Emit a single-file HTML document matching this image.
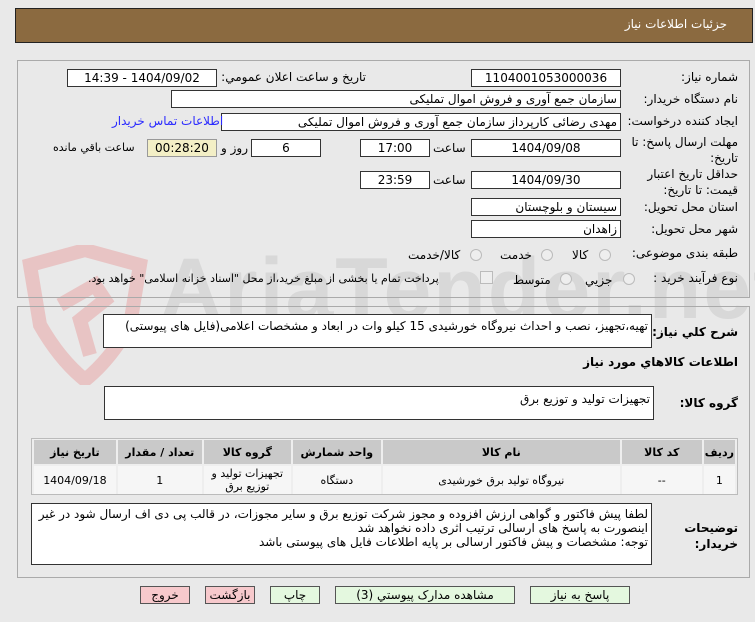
<!DOCTYPE html>
<html><head><meta charset="utf-8"><style>
body{margin:0;width:755px;height:622px;background:#e9e9e9;font-family:"DejaVu Sans",sans-serif;font-size:11px;color:#000;position:relative;overflow:hidden;direction:rtl}
.a{position:absolute;white-space:nowrap}
.in{position:absolute;background:#fff;border:1px solid #333;box-sizing:border-box;font-size:12px;line-height:16px;padding:0 3px;white-space:nowrap;overflow:hidden}
.c{text-align:center}
.lbl{position:absolute;white-space:nowrap;font-size:12px}
.btn{position:absolute;border:1px solid #555;box-sizing:border-box;text-align:center;font-size:12px;line-height:16px;background:#e4f8df}
.rad{position:absolute;width:10px;height:10px;border-radius:50%;border:1px solid #bbb;background:#eee}
table{border-collapse:separate;border-spacing:2px}
td{text-align:center;font-size:11px}
</style></head><body>
<div class="a" style="left:15px;top:8px;width:738px;height:35px;background:#8b6a40;border:1px solid #222;box-sizing:border-box"></div>
<div class="a" style="right:28px;top:17px;color:#fff;font-size:12px">جزئيات اطلاعات نياز</div>

<svg class="a" style="left:20px;top:245px" width="130" height="140" viewBox="0 0 130 140"><path d="M10 20 L65 5 L120 20 L110 80 Q90 115 65 135 Q40 115 20 80 Z" fill="none" stroke="#e8c4c4" stroke-width="14"/><path d="M40 60 L75 40 L85 55 L60 75 L70 110" fill="none" stroke="#e8c4c4" stroke-width="14"/></svg>
<div class="a" style="left:160px;top:240px;font-size:86px;font-weight:bold;color:#d8d8d8;direction:ltr;font-family:'Liberation Sans',sans-serif;letter-spacing:2px">AriaTender.net</div>

<div class="a" style="left:17px;top:60px;width:733px;height:238px;border:1px solid #aaa;box-sizing:border-box"></div>
<div class="a" style="left:17px;top:306px;width:733px;height:272px;border:1px solid #aaa;box-sizing:border-box"></div>

<div class="lbl" style="right:17px;top:70px">شماره نياز:</div>
<div class="in c" style="left:471px;top:69px;width:150px;height:18px">1104001053000036</div>
<div class="lbl" style="right:389px;top:70px">تاريخ و ساعت اعلان عمومي:</div>
<div class="in c" style="left:67px;top:69px;width:150px;height:18px">1404/09/02 - 14:39</div>

<div class="lbl" style="right:17px;top:92px">نام دستگاه خريدار:</div>
<div class="in" style="left:171px;top:90px;width:450px;height:18px">سازمان جمع آوری و فروش اموال تملیکی</div>

<div class="lbl" style="right:17px;top:114px">ايجاد کننده درخواست:</div>
<div class="in" style="left:221px;top:113px;width:400px;height:18px">مهدی رضائی کارپرداز  سازمان جمع آوری و فروش اموال تملیکی</div>
<div class="lbl" style="left:112px;top:114px;color:#2a2aff">اطلاعات تماس خريدار</div>

<div class="lbl" style="right:17px;top:134px;line-height:16px">مهلت ارسال پاسخ: تا<br>تاريخ:</div>
<div class="in c" style="left:471px;top:139px;width:150px;height:18px">1404/09/08</div>
<div class="lbl" style="left:433px;top:141px">ساعت</div>
<div class="in c" style="left:360px;top:139px;width:70px;height:18px">17:00</div>
<div class="in c" style="left:251px;top:139px;width:70px;height:18px">6</div>
<div class="lbl" style="left:221px;top:141px">روز و</div>
<div class="in c" style="left:147px;top:139px;width:70px;height:18px;background:#f3efc6;border-color:#999">00:28:20</div>
<div class="lbl" style="left:53px;top:141px;font-size:11px">ساعت باقي مانده</div>

<div class="lbl" style="right:17px;top:166px;line-height:16px">حداقل تاريخ اعتبار<br>قيمت: تا تاريخ:</div>
<div class="in c" style="left:471px;top:171px;width:150px;height:18px">1404/09/30</div>
<div class="lbl" style="left:433px;top:173px">ساعت</div>
<div class="in c" style="left:360px;top:171px;width:70px;height:18px">23:59</div>

<div class="lbl" style="right:17px;top:200px">استان محل تحويل:</div>
<div class="in" style="left:471px;top:198px;width:150px;height:18px">سیستان و بلوچستان</div>
<div class="lbl" style="right:17px;top:222px">شهر محل تحويل:</div>
<div class="in" style="left:471px;top:220px;width:150px;height:18px">زاهدان</div>

<div class="lbl" style="right:17px;top:246px">طبقه بندی موضوعی:</div>
<div class="rad" style="left:599px;top:249px"></div><div class="lbl" style="left:572px;top:248px">کالا</div>
<div class="rad" style="left:541px;top:249px"></div><div class="lbl" style="left:500px;top:248px">خدمت</div>
<div class="rad" style="left:470px;top:249px"></div><div class="lbl" style="left:408px;top:248px">کالا/خدمت</div>

<div class="lbl" style="right:17px;top:271px">نوع فرآيند خريد :</div>
<div class="rad" style="left:623px;top:273px"></div><div class="lbl" style="left:585px;top:273px">جزيي</div>
<div class="rad" style="left:560px;top:273px"></div><div class="lbl" style="left:513px;top:273px">متوسط</div>
<div class="a" style="left:480px;top:271px;width:11px;height:11px;border:1px solid #bbb;background:#eee"></div>
<div class="lbl" style="left:88px;top:272px;font-size:11px">پرداخت تمام يا بخشی از مبلغ خريد،از محل "اسناد خزانه اسلامی" خواهد بود.</div>

<div class="lbl" style="right:17px;top:325px;font-weight:bold">شرح کلي نياز:</div>
<div class="in" style="left:103px;top:314px;width:549px;height:34px;padding-top:3px;font-size:12px">تهیه،تجهیز، نصب و احداث نیروگاه خورشیدی 15 کیلو وات در ابعاد و مشخصات اعلامی(فایل های پیوستی)</div>
<div class="lbl" style="right:17px;top:355px;font-weight:bold">اطلاعات کالاهاي مورد نياز</div>
<div class="lbl" style="right:17px;top:396px;font-weight:bold">گروه کالا:</div>
<div class="in" style="left:104px;top:386px;width:550px;height:34px;padding-top:4px">تجهیزات تولید و توزیع برق</div>

<div class="a" style="left:31px;top:438px;width:707px;height:57px;border:1px solid #bbb;box-sizing:border-box;background:#eee">
<table style="width:705px;height:55px;margin:-1px 0 0 0">
<tr style="background:#c9c9c9;font-weight:bold;height:24px"><td style="width:26px">رديف</td><td style="width:78px">کد کالا</td><td style="width:235px">نام کالا</td><td style="width:86px">واحد شمارش</td><td style="width:85px">گروه کالا</td><td style="width:82px">تعداد / مقدار</td><td>تاريخ نياز</td></tr>
<tr style="background:#f6f6f6"><td>1</td><td>--</td><td>نیروگاه تولید برق خورشیدی</td><td>دستگاه</td><td style="line-height:13px">تجهیزات تولید و<br>توزیع برق</td><td>1</td><td>1404/09/18</td></tr>
</table></div>

<div class="lbl" style="right:17px;top:520px;font-weight:bold;line-height:16px">توضيحات<br>خريدار:</div>
<div class="in" style="left:31px;top:503px;width:621px;height:62px;line-height:14px;padding-top:3px;white-space:normal;font-size:12px">لطفا پیش فاکتور و گواهی ارزش افزوده و  مجوز شرکت توزیع برق و سایر مجوزات، در قالب پی دی اف ارسال شود در غیر اینصورت به پاسخ های ارسالی ترتیب اثری داده نخواهد شد<br>توجه: مشخصات و پیش فاکتور ارسالی بر پایه اطلاعات فایل های پیوستی باشد</div>

<div class="btn" style="left:530px;top:586px;width:100px;height:18px">پاسخ به نياز</div>
<div class="btn" style="left:335px;top:586px;width:180px;height:18px">مشاهده مدارک پيوستي (3)</div>
<div class="btn" style="left:270px;top:586px;width:50px;height:18px">چاپ</div>
<div class="btn" style="left:205px;top:586px;width:50px;height:18px;background:#f7c9cc">بازگشت</div>
<div class="btn" style="left:140px;top:586px;width:50px;height:18px;background:#f7c9cc">خروج</div>
</body></html>
